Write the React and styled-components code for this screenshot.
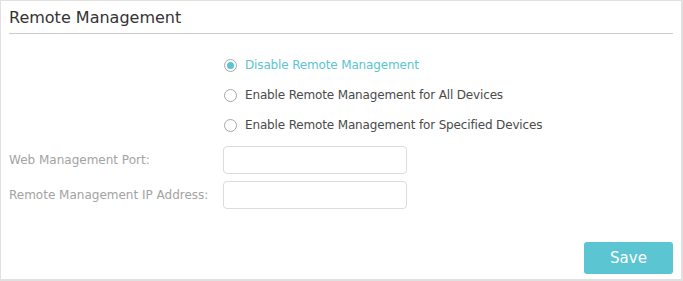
import React, { useState } from "react";
import styled, { createGlobalStyle } from "styled-components";

const Global = createGlobalStyle`
  html, body { margin: 0; padding: 0; background: #fff; }
  body { font-family: "DejaVu Sans", Tahoma, sans-serif; }
  * { box-sizing: border-box; }
`;

const Panel = styled.div`
  width: 683px;
  height: 281px;
  border: 1px solid #e0e0e0;
  border-right-width: 2px;
  border-bottom-width: 2px;
  display: flex;
  flex-direction: column;
  padding: 0 8px 0 8px;
`;

const Title = styled.h2`
  margin: 0;
  font-weight: normal;
  font-size: 16px;
  color: #333;
  height: 33px;
  line-height: 32px;
  padding-top: 1px;
  border-bottom: 1px solid #ccc;
`;

const Options = styled.div`
  display: flex;
  flex-direction: column;
  gap: 10px;
  padding-left: 214px;
  margin-top: 21px;
`;

const Option = styled.label`
  display: flex;
  align-items: center;
  gap: 8px;
  height: 20px;
  font-size: 12px;
  letter-spacing: -0.15px;
  color: ${(p) => (p.$checked ? "#5bc4d1" : "#4a4a4a")};
  cursor: pointer;
`;

const Radio = styled.span`
  width: 13px;
  height: 13px;
  border-radius: 50%;
  border: 1px solid #a8a8a8;
  display: flex;
  align-items: center;
  justify-content: center;
  flex: none;
  margin-left: 1px;
  &::after {
    content: "";
    width: 7px;
    height: 7px;
    border-radius: 50%;
    background: ${(p) => (p.$checked ? "#5bc4d1" : "transparent")};
  }
`;

const Fields = styled.div`
  display: flex;
  flex-direction: column;
  gap: 7px;
  margin-top: 11px;
`;

const Field = styled.div`
  display: flex;
  align-items: center;
`;

const Label = styled.span`
  width: 214px;
  font-size: 12px;
  color: #a3a3a3;
`;

const Input = styled.input`
  width: 184px;
  height: 28px;
  border: 1px solid #dcdcdc;
  border-radius: 4px;
  outline: none;
  font: inherit;
  font-size: 12px;
  padding: 0 6px;
`;

const Footer = styled.div`
  display: flex;
  justify-content: flex-end;
  margin-top: auto;
  margin-bottom: 5px;
`;

const Button = styled.button`
  width: 89px;
  height: 32px;
  border: none;
  border-radius: 3px;
  background: #5bc5d1;
  color: #fff;
  font-family: inherit;
  font-size: 15px;
  cursor: pointer;
`;

const options = [
  "Disable Remote Management",
  "Enable Remote Management for All Devices",
  "Enable Remote Management for Specified Devices",
];

export default function App() {
  const [sel, setSel] = useState(0);
  return (
    <>
      <Global />
      <Panel>
        <Title>Remote Management</Title>
        <Options>
          {options.map((o, i) => (
            <Option key={o} $checked={sel === i} onClick={() => setSel(i)}>
              <Radio $checked={sel === i} />
              {o}
            </Option>
          ))}
        </Options>
        <Fields>
          <Field>
            <Label>Web Management Port:</Label>
            <Input />
          </Field>
          <Field>
            <Label>Remote Management IP Address:</Label>
            <Input />
          </Field>
        </Fields>
        <Footer>
          <Button>Save</Button>
        </Footer>
      </Panel>
    </>
  );
}
